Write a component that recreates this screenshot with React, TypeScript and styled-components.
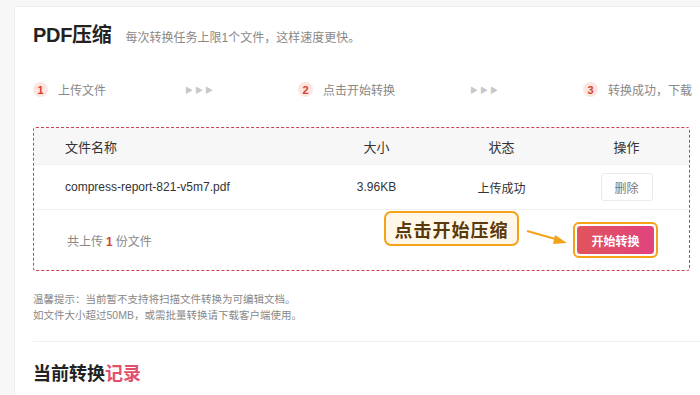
import React from "react";
import styled, { createGlobalStyle } from "styled-components";

const Global = createGlobalStyle`
  html, body { margin: 0; padding: 0; }
  body {
    background: #f7f7f7;
    overflow: hidden;
    font-family: "Liberation Sans", "Noto Sans CJK SC", sans-serif;
    color: #333;
  }
`;

const Page = styled.div`
  width: 700px;
  height: 395px;
  overflow: hidden;
  padding: 6px 0 0 14px;
  box-sizing: border-box;
`;

const Card = styled.div`
  width: 720px;
  height: 420px;
  background: #fff;
  border: 1px solid #eeeeee;
  box-sizing: border-box;
  padding: 12px 0 0 18px;
`;

const Inner = styled.div`
  width: 657px;
  display: flex;
  flex-direction: column;
`;

const Header = styled.div`
  display: flex;
  align-items: baseline;
  gap: 14px;
  height: 26px;
`;

const Title = styled.h1`
  margin: 0;
  font-size: 20px;
  font-weight: 700;
  color: #222;
  letter-spacing: -0.3px;
`;

const Sub = styled.span`
  font-size: 12px;
  color: #888;
`;

const Steps = styled.div`
  display: grid;
  grid-template-columns: 152px 113px 172px 113px 1fr;
  align-items: center;
  margin-top: 36px;
  height: 16px;
`;

const Step = styled.div`
  display: flex;
  align-items: center;
  gap: 10px;
  font-size: 12px;
  color: #888;
  white-space: nowrap;
`;

const Num = styled.span`
  width: 15px;
  height: 15px;
  border-radius: 50%;
  background: #fde6e1;
  color: #d8402c;
  font-size: 11px;
  font-weight: 700;
  display: flex;
  align-items: center;
  justify-content: center;
`;

const Arrows = styled.span`
  font-size: 8px;
  color: #c8c8c8;
  letter-spacing: 2px;
`;

const Box = styled.div`
  margin-top: 30px;
  border: 1px dashed #c9444c;
  border-radius: 3px;
  height: 144px;
  box-sizing: border-box;
  display: flex;
  flex-direction: column;
`;

const Row = styled.div<{ $head?: boolean }>`
  display: grid;
  grid-template-columns: 1fr 125px 125px 125px;
  align-items: center;
  height: ${(p) => (p.$head ? "36px" : "44px")};
  background: ${(p) => (p.$head ? "#f7f7f7" : "#fff")};
  border-bottom: 1px solid #f0f0f0;
  font-size: ${(p) => (p.$head ? "13px" : "12px")};
  color: #333;
`;

const Cell = styled.div<{ $left?: boolean }>`
  padding-left: ${(p) => (p.$left ? "31px" : "0")};
  display: flex;
  justify-content: ${(p) => (p.$left ? "flex-start" : "center")};
`;

const DelBtn = styled.button`
  width: 52px;
  height: 28px;
  border: 1px solid #eaeaea;
  border-radius: 3px;
  background: #fff;
  color: #777;
  font-size: 12px;
  font-family: inherit;
  padding: 0;
`;

const Foot = styled.div`
  flex: 1;
  display: flex;
  align-items: center;
  justify-content: space-between;
  padding: 0 31px 0 33px;
`;

const Count = styled.span`
  font-size: 12px;
  color: #888;
  b {
    color: #d8402c;
    margin: 0 3px;
  }
`;

const Right = styled.div`
  display: flex;
  align-items: center;
`;

const Callout = styled.div`
  width: 135px;
  height: 35px;
  box-sizing: border-box;
  border: 2px solid #f3a21a;
  border-radius: 7px;
  background: #fff8e8;
  color: #5a3a0c;
  font-size: 18px;
  font-weight: 700;
  display: flex;
  align-items: center;
  justify-content: center;
  letter-spacing: 1px;
  margin-top: -23px;
`;

const Arrow = styled.svg`
  width: 44px;
  height: 20px;
  margin: -6px 4px 0 6px;
`;

const Ring = styled.div`
  border: 2px solid #f3a21a;
  border-radius: 6px;
  padding: 1px;
`;

const StartBtn = styled.button`
  width: 79px;
  height: 30px;
  border: 1px solid #fff;
  border-radius: 4px;
  background: linear-gradient(90deg, #e0545c, #e0437f);
  color: #fff;
  font-size: 12px;
  font-weight: 700;
  font-family: inherit;
  display: block;
`;

const Tips = styled.div`
  margin-top: 20px;
  font-size: 10.5px;
  line-height: 16px;
  color: #888;
`;

const Divider = styled.hr`
  border: none;
  border-top: 1px solid #f0f0f0;
  margin: 18px 0 0;
  width: 700px;
`;

const Record = styled.h2`
  margin: 17px 0 0;
  font-size: 18px;
  font-weight: 700;
  color: #222;
  span { color: #e2506c; }
`;

export default function App() {
  return (
    <Page>
      <Global />
      <Card>
        <Inner>
          <Header>
            <Title>PDF压缩</Title>
            <Sub>每次转换任务上限1个文件，这样速度更快。</Sub>
          </Header>
          <Steps>
            <Step><Num>1</Num>上传文件</Step>
            <Arrows>▶▶▶</Arrows>
            <Step><Num>2</Num>点击开始转换</Step>
            <Arrows>▶▶▶</Arrows>
            <Step><Num>3</Num>转换成功，下载</Step>
          </Steps>
          <Box>
            <Row $head>
              <Cell $left>文件名称</Cell>
              <Cell>大小</Cell>
              <Cell>状态</Cell>
              <Cell>操作</Cell>
            </Row>
            <Row>
              <Cell $left>compress-report-821-v5m7.pdf</Cell>
              <Cell>3.96KB</Cell>
              <Cell>上传成功</Cell>
              <Cell><DelBtn>删除</DelBtn></Cell>
            </Row>
            <Foot>
              <Count>共上传<b>1</b>份文件</Count>
              <Right>
                <Callout>点击开始压缩</Callout>
                <Arrow viewBox="0 0 44 20">
                  <path d="M2 4 L34 13" stroke="#f3a21a" strokeWidth="2" fill="none" />
                  <path d="M30 8 L42 16 L28 17 Z" fill="#f3a21a" />
                </Arrow>
                <Ring><StartBtn>开始转换</StartBtn></Ring>
              </Right>
            </Foot>
          </Box>
          <Tips>
            温馨提示：当前暂不支持将扫描文件转换为可编辑文档。<br />
            如文件大小超过50MB，或需批量转换请下载客户端使用。
          </Tips>
          <Divider />
          <Record>当前转换<span>记录</span></Record>
        </Inner>
      </Card>
    </Page>
  );
}
